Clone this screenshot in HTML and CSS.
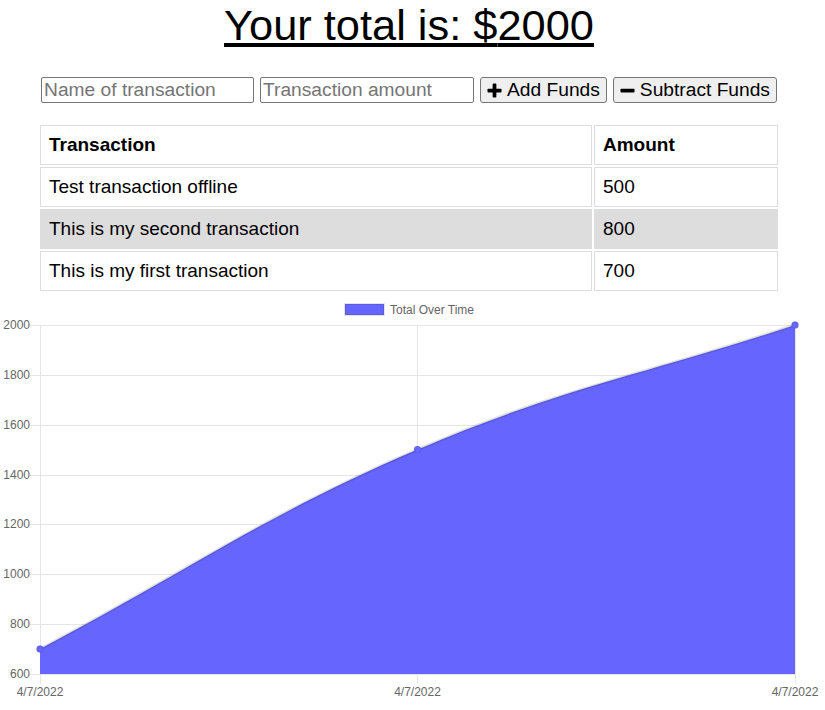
FILE: index.html
```html
<!DOCTYPE html>
<html>
<head>
<meta charset="utf-8">
<link rel="stylesheet" href="styles.css">
</head>
<body>
<div class="wrap">
  <h1 class="total">Your total is: $<span>2000</span></h1>
  <form class="controls">
    <input class="name" type="text" placeholder="Name of transaction">
    <input class="amount" type="number" placeholder="Transaction amount">
    <button type="button" class="btn"><svg class="ico" viewBox="0 0 16 16"><rect x="6" y="0.5" width="4" height="15" rx="1"/><rect x="0.5" y="6" width="15" height="4" rx="1"/></svg> Add Funds</button>
    <button type="button" class="btn"><svg class="ico" viewBox="0 0 16 16"><rect x="0.5" y="6" width="15" height="4" rx="1"/></svg> Subtract Funds</button>
  </form>
  <table class="tx">
    <thead>
      <tr><th class="c1">Transaction</th><th class="c2">Amount</th></tr>
    </thead>
    <tbody>
      <tr><td>Test transaction offline</td><td>500</td></tr>
      <tr><td>This is my second transaction</td><td>800</td></tr>
      <tr><td>This is my first transaction</td><td>700</td></tr>
    </tbody>
  </table>
</div>
<div class="chart">
<svg width="825" height="417" viewBox="0 293 825 417" xmlns="http://www.w3.org/2000/svg">
  <g class="legend">
    <rect x="345" y="304" width="39" height="11" fill="#6666ff" stroke="rgba(0,0,0,0.1)" stroke-width="2"/>
    <text x="390" y="313.5">Total Over Time</text>
  </g>
  <g stroke="#e5e5e5" stroke-width="1" fill="none">
    <path d="M30 325.5H795.5M30 375.5H795.5M30 425.5H795.5M30 475.5H795.5M30 524.5H795.5M30 574.5H795.5M30 624.5H795.5M30 674.5H795.5"/>
    <path d="M40.5 325V684M417.5 325V684M795.5 325V684"/>
  </g>
  <path d="M40,649 C191,569.2 261.1,516.7 417.5,449.6 C563.1,387.1 644,374.8 795,325 L795,674 L40,674 Z" fill="#6666ff"/>
  <path d="M40,649 C191,569.2 261.1,516.7 417.5,449.6 C563.1,387.1 644,374.8 795,325" fill="none" stroke="rgba(0,0,0,0.12)" stroke-width="3"/>
  <g fill="#6666ff" stroke="rgba(0,0,0,0.1)" stroke-width="1">
    <circle cx="40" cy="649" r="3.5"/>
    <circle cx="417.5" cy="449.6" r="3.5"/>
    <circle cx="795" cy="325" r="3.5"/>
  </g>
  <g class="ylab" text-anchor="end">
    <text x="30" y="329">2000</text>
    <text x="30" y="379">1800</text>
    <text x="30" y="429">1600</text>
    <text x="30" y="479">1400</text>
    <text x="30" y="528">1200</text>
    <text x="30" y="578">1000</text>
    <text x="30" y="628">800</text>
    <text x="30" y="678">600</text>
  </g>
  <g class="xlab" text-anchor="middle">
    <text x="40" y="696">4/7/2022</text>
    <text x="417.5" y="696">4/7/2022</text>
    <text x="795" y="696">4/7/2022</text>
  </g>
</svg>
</div>
</body>
</html>
```
FILE: styles.css
```css
html, body {
  margin: 0;
  padding: 0;
  background: #fff;
}
body {
  font-family: "Liberation Sans", Arial, Helvetica, sans-serif;
  color: #000;
}
.wrap {
  width: 818px;
  text-align: center;
}
.total {
  margin: 0;
  padding-top: 1px;
  font-size: 43.4px;
  font-weight: normal;
  text-decoration: underline;
  line-height: 49px;
}
.controls {
  display: flex;
  justify-content: center;
  gap: 6px;
  margin-top: 27px;
}
.controls input {
  box-sizing: border-box;
  height: 26px;
  font-family: inherit;
  font-size: 19.2px;
  padding: 1px 2px;
  border: 1px solid #767676;
  border-radius: 2px;
  background: #fff;
  margin: 0;
}
.controls input::placeholder {
  color: #757575;
}
.controls .name { width: 213px; }
.controls .amount { width: 214px; }
.btn {
  box-sizing: border-box;
  height: 26px;
  display: flex;
  align-items: center;
  font-family: inherit;
  font-size: 19.2px;
  padding: 0 6px;
  gap: 5px;
  border: 1px solid #767676;
  border-radius: 3px;
  background: #efefef;
  color: #000;
  margin: 0;
}
.ico {
  width: 15px;
  height: 15px;
  fill: #000;
}
.tx {
  margin: 20px auto 0;
  width: 742px;
  border-collapse: separate;
  border-spacing: 2px;
  text-align: left;
  font-size: 19px;
}
.tx th, .tx td {
  border: 1px solid #ddd;
  padding: 8px 8px;
  line-height: 22px;
  height: 22px;
}
.tx th { font-weight: bold; }
.tx .c1 { width: 534px; }
.tx tbody tr:nth-child(2) td {
  background: #ddd;
}
.chart {
  width: 825px;
  height: 417px;
}
.chart svg { display: block; }
.chart text {
  font-family: "Liberation Sans", Arial, Helvetica, sans-serif;
  font-size: 12px;
  fill: #666;
}
```
